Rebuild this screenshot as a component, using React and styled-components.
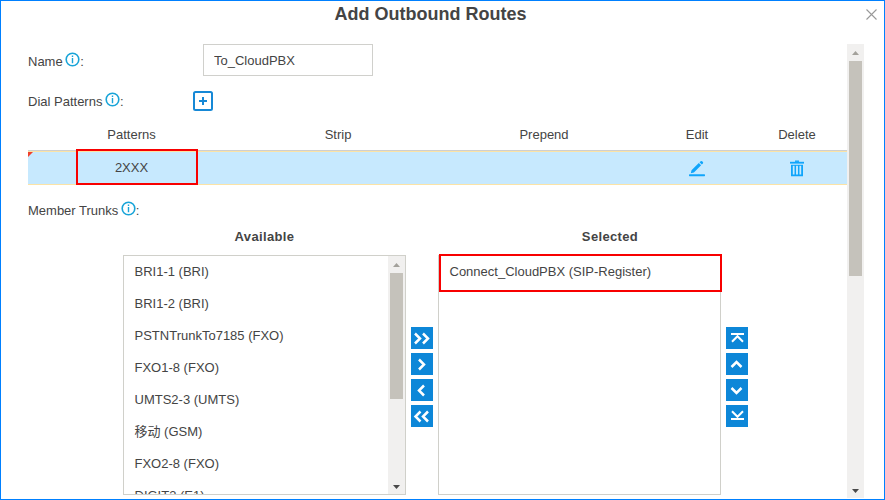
import React from "react";
import styled, { createGlobalStyle } from "styled-components";

const GlobalStyle = createGlobalStyle`
  * { box-sizing: border-box; }
  body {
    margin: 0;
    background: #fff;
    color: #444;
    font: 13px/16px "Liberation Sans", Arial, "Noto Sans CJK SC", sans-serif;
  }
  svg { display: block; }
`;

const Dialog = styled.div`
  display: flex;
  flex-direction: column;
  width: 885px;
  height: 500px;
  border: 1px solid #0080ff;
  background: #fff;
  overflow: hidden;
`;

const TitleBar = styled.header`
  display: flex;
  flex: none;
  height: 43px;
  padding: 2px 6px 0 20px;
`;

const Title = styled.h1`
  flex: 1;
  margin: 0;
  padding-right: 25px;
  text-align: center;
  font-size: 18px;
  line-height: 22px;
`;

const CloseButton = styled.button`
  width: 13px;
  height: 13px;
  margin-top: 5px;
  padding: 0;
  border: 0;
  background: none;
`;

const Body = styled.div`
  display: flex;
  height: 454px;
  padding-left: 27px;
`;

const Form = styled.main`
  width: 819px;
`;

const Field = styled.div`
  display: flex;
  align-items: center;
  height: ${(p) => p.$height}px;
`;

const Label = styled.label`
  display: flex;
  align-items: center;
  width: ${(p) => p.$width}px;
  padding-top: ${(p) => p.$drop || 0}px;
  white-space: pre;
`;

const HintIcon = styled.svg`
  width: 15px;
  height: 15px;
  margin: -4px 0 0 2.5px;
`;

const TextInput = styled.input`
  width: 170px;
  height: 32px;
  padding: 0 10px;
  border: 1px solid #d0d0cc;
  color: #444;
  font: inherit;
`;

const AddButton = styled.button`
  width: 20px;
  height: 20px;
  padding: 0;
  border: 0;
  background: none;
`;

const columns = "207px 206px 206px 100px 100px";

const HeadRow = styled.div`
  display: grid;
  grid-template-columns: ${columns};
  height: 24px;
  padding-top: 1px;
  text-align: center;
`;

const PatternRow = styled.div`
  position: relative;
  display: grid;
  grid-template-columns: ${columns};
  align-items: center;
  justify-items: center;
  height: 35px;
  padding-top: 1px;
  border-top: 1px solid #cfcfcf;
  border-bottom: 1px solid #fbe3a6;
  background: #c7e9fe;
  box-shadow: inset 0 1px #fbe3a6;
`;

const DirtyMark = styled.span`
  position: absolute;
  left: 0;
  top: 1px;
  border-top: 5px solid #f0402c;
  border-right: 5px solid transparent;
`;

const Highlight = styled.span`
  position: absolute;
  left: ${(p) => p.$left}px;
  top: ${(p) => p.$top}px;
  width: ${(p) => p.$width}px;
  height: ${(p) => p.$height}px;
  border: 2px solid #f80000;
  pointer-events: none;
`;

const Transfer = styled.section`
  display: flex;
  padding: 8px 0 0 95px;
`;

const ListGroup = styled.div`
  width: 283px;
`;

const ListTitle = styled.h2`
  height: 27px;
  margin: 0;
  padding: 1px 0 0 ${(p) => p.$indent || 0}px;
  text-align: center;
  font-size: 13px;
  line-height: 16px;
  letter-spacing: 0.35px;
`;

const ListBox = styled.div`
  position: relative;
  display: flex;
  height: 240px;
  border: 1px solid #d0d0ca;
`;

const Items = styled.ul`
  flex: 1;
  margin: 0;
  padding: 0;
  overflow: hidden;
  list-style: none;
`;

const Item = styled.li`
  height: 32px;
  padding-left: 10.5px;
  line-height: 31px;
`;

const Buttons = styled.div`
  display: flex;
  flex-direction: column;
  gap: 4px;
  padding: 99px 5px 0;
`;

const MoveButton = styled.button`
  width: 22px;
  height: 22px;
  padding: 0;
  border: 0;
  background: #0d87d8;
`;

const Track = styled.div`
  display: flex;
  flex: none;
  flex-direction: column;
  align-items: center;
  width: 17px;
  background: #f1f0ef;
`;

const Thumb = styled.div`
  width: 13px;
  height: ${(p) => p.$length}px;
  margin-bottom: auto;
  background: #c5c2bb;
`;

function ScrollBar({ length }) {
  return (
    <Track>
      <svg width="17" height="17" viewBox="0 0 17 17">
        <path d="M5 11h7L8.500 7z" fill="#a3a19b" />
      </svg>
      <Thumb $length={length} />
      <svg width="17" height="17" viewBox="0 0 17 17">
        <path d="M5 8h7l-3.500 4z" fill="#494949" />
      </svg>
    </Track>
  );
}

function Hint() {
  return (
    <HintIcon viewBox="0 0 15 15">
      <circle cx="7.500" cy="7.500" r="6.300" fill="none" stroke="#18a4d8" strokeWidth="1.600" />
      <path d="M7.500 3.500v1.500M7.500 6v5.200" stroke="#18a4d8" strokeWidth="1.400" />
    </HintIcon>
  );
}

const glyphs = {
  addAll: ["M4 6.500L9 11.500L4 16.500M12 6.500L17 11.500L12 16.500", 2.5],
  add: ["M8 6.500L13 11.500L8 16.500", 2.5],
  remove: ["M13 6.500L8 11.500L13 16.500", 2.5],
  removeAll: ["M9.500 6.500L4.500 11.500L9.500 16.500M17 6.500L12 11.500L17 16.500", 2.5],
  top: ["M5 7H18M6 14.800L11.500 9.200L17 14.800", 2],
  up: ["M5.500 14L10.500 9L15.500 14", 2.5],
  down: ["M5.500 9L10.500 14L15.500 9", 2.5],
  bottom: ["M5 14H18M6 6.200L11.500 11.800L17 6.200", 2],
};

function Move({ kind }) {
  const [path, weight] = glyphs[kind];
  return (
    <MoveButton aria-label={kind}>
      <svg width="22" height="22" viewBox="0 0 22 22">
        <path d={path} fill="none" stroke="#fff" strokeWidth={weight} />
      </svg>
    </MoveButton>
  );
}

const EditIcon = () => (
  <svg width="16" height="17" viewBox="0 0 16 17" fill="#10a5fb">
    <path d="M1.800 13.200L2.500 10.200L9.800 3L12.100 5.200L4.900 12.400zM10.500 2.300L11.700 1.200Q12.400 .6 13.100 1.200L13.900 2Q14.500 2.700 13.900 3.400L12.800 4.500z" />
    <rect y="14.300" width="16" height="1.900" rx=".6" />
  </svg>
);

const TrashIcon = () => (
  <svg width="14" height="17" viewBox="0 0 14 17" fill="none" stroke="#10a5fb">
    <path d="M0 2.700H14" strokeWidth="1.800" />
    <path d="M5 1.200H9" strokeWidth="1.400" />
    <path d="M1.900 5V15.300H12.100V5" strokeWidth="1.800" />
    <path d="M1 5.300H13" strokeWidth="1" />
    <path d="M5.300 5V15M8.700 5V15" strokeWidth="1.500" />
  </svg>
);

const trunks = [
  "BRI1-1 (BRI)",
  "BRI1-2 (BRI)",
  "PSTNTrunkTo7185 (FXO)",
  "FXO1-8 (FXO)",
  "UMTS2-3 (UMTS)",
  "移动 (GSM)",
  "FXO2-8 (FXO)",
  "DIGIT3 (E1)",
];

export default function App() {
  return (
    <>
      <GlobalStyle />
      <Dialog>
        <TitleBar>
          <Title>Add Outbound Routes</Title>
          <CloseButton aria-label="Close">
            <svg width="13" height="13" viewBox="0 0 13 13">
              <path d="M1.500 1.500L11.500 11.500M11.500 1.500L1.500 11.500" stroke="#999" strokeWidth="1.100" />
            </svg>
          </CloseButton>
        </TitleBar>
        <Body>
          <Form>
            <Field $height={32}>
              <Label $width={175} $drop={3}>Name<Hint />:</Label>
              <TextInput defaultValue="To_CloudPBX" />
            </Field>
            <Field $height={50}>
              <Label $width={165} $drop={1}>Dial Patterns<Hint />:</Label>
              <AddButton aria-label="Add pattern">
                <svg width="20" height="20" viewBox="0 0 20 20">
                  <rect x="1" y="1" width="18" height="18" rx="1.500" fill="none" stroke="#1688d6" strokeWidth="2" />
                  <path d="M6 10H14M10 6V14" stroke="#1688d6" strokeWidth="2" />
                </svg>
              </AddButton>
            </Field>
            <HeadRow>
              <span>Patterns</span>
              <span>Strip</span>
              <span>Prepend</span>
              <span>Edit</span>
              <span>Delete</span>
            </HeadRow>
            <PatternRow>
              <DirtyMark />
              <span>2XXX</span>
              <span />
              <span />
              <EditIcon />
              <TrashIcon />
              <Highlight $left={48} $top={-2} $width={122} $height={36} />
            </PatternRow>
            <Field $height={35}>
              <Label $width={165} $drop={16}>Member Trunks<Hint />:</Label>
            </Field>
            <Transfer>
              <ListGroup>
                <ListTitle>Available</ListTitle>
                <ListBox>
                  <Items>
                    {trunks.map((name) => (
                      <Item key={name}>{name}</Item>
                    ))}
                  </Items>
                  <ScrollBar length={126} />
                </ListBox>
              </ListGroup>
              <Buttons>
                <Move kind="addAll" />
                <Move kind="add" />
                <Move kind="remove" />
                <Move kind="removeAll" />
              </Buttons>
              <ListGroup>
                <ListTitle $indent={61}>Selected</ListTitle>
                <ListBox>
                  <Items>
                    <Item>Connect_CloudPBX (SIP-Register)</Item>
                  </Items>
                  <Highlight $left={0} $top={-2} $width={283} $height={38} />
                </ListBox>
              </ListGroup>
              <Buttons>
                <Move kind="top" />
                <Move kind="up" />
                <Move kind="down" />
                <Move kind="bottom" />
              </Buttons>
            </Transfer>
          </Form>
          <ScrollBar length={215} />
        </Body>
      </Dialog>
    </>
  );
}
